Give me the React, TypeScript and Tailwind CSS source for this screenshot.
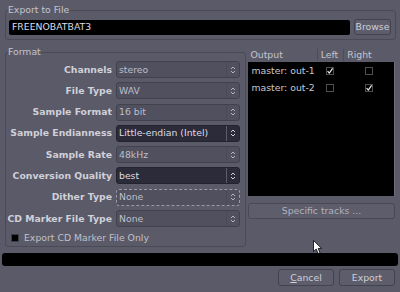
import React from "react";

type Variant = "normal" | "dark" | "focus";

function Arrows({ color }: { color: string }) {
  return (
    <svg width="6" height="10" viewBox="0 0 6 10" fill="none">
      <path d="M1 4 L3 2 L5 4" stroke={color} strokeWidth="1" />
      <path d="M1 6 L3 8 L5 6" stroke={color} strokeWidth="1" />
    </svg>
  );
}

function Combo({ value, variant = "normal" }: { value: string; variant?: Variant }) {
  const box =
    variant === "dark"
      ? "bg-[#2b2b3a] border-solid border-[#23232d] text-[#dcdce4]"
      : variant === "focus"
      ? "bg-[#50505e] border-dashed border-[#9a9aa8] text-[#bfbfc9]"
      : "bg-[#50505e] border-solid border-[#42424e] text-[#bfbfc9]";
  const sep = variant === "dark" ? "border-[#5c5c6a]" : "border-[#4a4a57]";
  return (
    <div className={`h-[17px] flex items-stretch rounded-[3px] border ${box}`}>
      <div className="flex-1 flex items-center pl-[2px] whitespace-nowrap">{value}</div>
      <div className={`w-[13px] flex items-center justify-center border-l ${sep}`}>
        <Arrows color={variant === "dark" ? "#d0d0d8" : "#b4b4be"} />
      </div>
    </div>
  );
}

function Label({ children }: { children: React.ReactNode }) {
  return (
    <div className="h-[17px] flex items-center justify-end font-bold text-[#d0d0d8] whitespace-nowrap">
      {children}
    </div>
  );
}

function ListCheck({ checked }: { checked?: boolean }) {
  return (
    <div className="relative w-[8px] h-[8px] border border-[#4e4e4e] bg-black">
      {checked && (
        <svg className="absolute left-[-1px] top-[-1px]" width="8" height="8" viewBox="0 0 8 8" fill="none">
          <path d="M1.6 4.2 L3.3 6.1 L6.6 1.4" stroke="#f0f0f0" strokeWidth="1.2" />
        </svg>
      )}
    </div>
  );
}

function Row({ name, left, right }: { name: string; left?: boolean; right?: boolean }) {
  return (
    <div className="h-[16.5px] flex items-center">
      <div className="w-[68.7px] pl-[3.5px] text-[#c8c8d0] whitespace-nowrap">{name}</div>
      <div className="w-[26.6px] flex justify-center">
        <ListCheck checked={left} />
      </div>
      <div className="flex-1 flex justify-center">
        <ListCheck checked={right} />
      </div>
    </div>
  );
}

export default function App() {
  const rows: { label: string; value: string; variant?: Variant }[] = [
    { label: "Channels", value: "stereo" },
    { label: "File Type", value: "WAV" },
    { label: "Sample Format", value: "16 bit" },
    { label: "Sample Endianness", value: "Little-endian (Intel)", variant: "dark" },
    { label: "Sample Rate", value: "48kHz" },
    { label: "Conversion Quality", value: "best", variant: "dark" },
    { label: "Dither Type", value: "None", variant: "focus" },
    { label: "CD Marker File Type", value: "None" },
  ];

  return (
    <div className="relative w-[400px] h-[292px] overflow-hidden bg-[#5a5a69] text-[9.3px] leading-[10px] text-[#c4c4cc] font-['DejaVu_Sans',sans-serif]">
      <div className="flex flex-col">
        {/* Export to File */}
        <fieldset className="ml-[5px] mr-[4px] mt-[5px] border border-[#4a4a57] rounded-[3px] pl-[3px] pr-[4px] pb-[4px]">
          <legend className="ml-[-1px] px-0 leading-[10px] text-[#c4c4cc]">Export to File</legend>
          <div className="flex items-center gap-[4px] mt-[4px] h-[16px]">
            <div className="h-[15px] flex-1 bg-black rounded-[2px] flex items-center pl-[3px] text-[#dcdce4]">
              FREENOBATBAT3
            </div>
            <button className="h-[16px] w-[37px] rounded-[3px] border border-[#43434f] bg-[#5d5d6c] text-[#cfcfd7] flex items-center justify-center">
              Browse
            </button>
          </div>
        </fieldset>

        {/* Middle */}
        <div className="flex mt-[7px]">
          <fieldset className="ml-[5px] w-[241px] border border-[#4a4a57] rounded-[3px] px-[5px] pt-[4px] pb-[4px]">
            <legend className="ml-[-3px] px-0 leading-[10px] text-[#c4c4cc]">Format</legend>
            <div className="grid grid-cols-[101px_124px] gap-x-[4px] gap-y-[4.3px]">
              {rows.map((r) => (
                <React.Fragment key={r.label}>
                  <Label>{r.label}</Label>
                  <Combo value={r.value} variant={r.variant} />
                </React.Fragment>
              ))}
            </div>
            <div className="flex items-center gap-[5px] mt-[6px] h-[9px]">
              <div className="w-[8px] h-[8px] bg-black border border-[#3c3c44]" />
              <span className="text-[#c0c0c8] whitespace-nowrap">Export CD Marker File Only</span>
            </div>
          </fieldset>

          <div className="ml-[2px] w-[147px] flex flex-col">
            <div className="h-[15px] flex items-center text-[#c4c4cc]">
              <div className="w-[68.7px] pl-[2.5px]">Output</div>
              <div className="w-[26.6px] h-[12px] flex items-center pl-[3px] border-l border-[#4c4c59]">Left</div>
              <div className="flex-1 h-[12px] flex items-center pl-[3px] border-l border-[#4c4c59]">Right</div>
            </div>
            <div className="h-[134px] bg-black pt-[1px] border-r border-[#6a6a78]">
              <Row name="master: out-1" left />
              <Row name="master: out-2" right />
            </div>
            <button className="mt-[7px] h-[16px] rounded-[3px] border border-[#484856] bg-[#5d5d6c] text-[#b0b0bc] flex items-center justify-center">
              Specific tracks ...
            </button>
          </div>
        </div>

        {/* Progress bar */}
        <div className="mt-[6px] ml-[2px] w-[396px] h-[13px] bg-black rounded-[3px]" />

        {/* Buttons */}
        <div className="mt-[3px] flex justify-end gap-[5px] mr-[5px]">
          <button className="w-[56px] h-[17px] rounded-[3px] border border-[#43434f] bg-[#5d5d6c] text-[#cfcfd7] flex items-center justify-center">
            <span>
              <span className="underline">C</span>ancel
            </span>
          </button>
          <button className="w-[56px] h-[17px] rounded-[3px] border border-[#43434f] bg-[#5d5d6c] text-[#cfcfd7] flex items-center justify-center">
            Export
          </button>
        </div>
      </div>

      {/* Mouse cursor */}
      <svg className="absolute left-[313px] top-[240px]" width="10" height="15" viewBox="0 0 10 15">
        <path d="M0.5 0.5 L0.5 11.5 L3.2 9 L5.2 13.6 L7 12.8 L5.1 8.4 L8.6 8.4 Z" fill="#ffffff" stroke="#000000" strokeWidth="0.8" />
      </svg>
    </div>
  );
}
